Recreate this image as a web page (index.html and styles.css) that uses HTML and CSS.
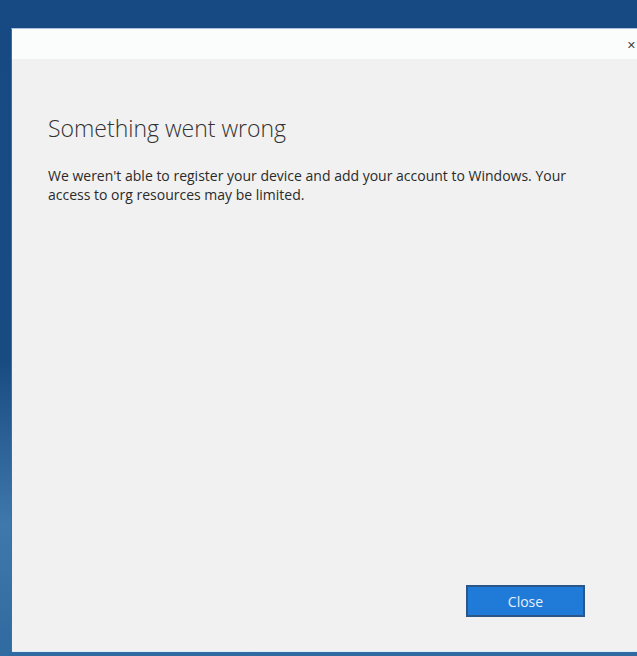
FILE: index.html
```html
<!DOCTYPE html>
<html>
<head>
<meta charset="utf-8">
<link rel="stylesheet" href="styles.css">
</head>
<body>
<div class="desktop">
  <div class="window">
    <div class="titlebar">
      <span class="close-x">✕</span>
    </div>
    <div class="content">
      <h1 class="title">Something went wrong</h1>
      <p class="message">We weren't able to register your device and add your account to Windows. Your access to org resources may be limited.</p>
      <div class="spacer"></div>
      <div class="actions">
        <button class="btn">Close</button>
      </div>
    </div>
  </div>
</div>
</body>
</html>
```
FILE: styles.css
```css
html, body {
  margin: 0;
  padding: 0;
  width: 637px;
  height: 656px;
  overflow: hidden;
}
.desktop {
  width: 637px;
  height: 656px;
  box-sizing: border-box;
  background: linear-gradient(180deg, #174a82 0%, #184b82 55%, #3f78ab 80%, #2f6aa0 100%);
  padding: 28px 0 4px 11px;
  display: flex;
}
.window {
  flex: 1;
  display: flex;
  flex-direction: column;
  background: #f1f1f1;
  border-left: 1px solid #3e6f9c;
  border-top: 1px solid #a9c2da;
  box-sizing: border-box;
  font-family: "Open Sans", "Noto Sans", sans-serif;
}
.titlebar {
  height: 30px;
  background: #fbfcfc;
  display: flex;
  justify-content: flex-end;
  align-items: center;
}
.close-x {
  font-family: "DejaVu Sans", sans-serif;
  font-size: 11px;
  color: #444;
  margin-right: 1px;
  margin-top: 2px;
}
.content {
  flex: 1;
  display: flex;
  flex-direction: column;
  padding: 0 0 0 36px;
  border-bottom: 1px solid #d9eefa;
}
.title {
  margin: 54px 0 0 0;
  font-weight: 300;
  font-size: 23px;
  line-height: 30px;
  color: #333;
}
.message {
  margin: 23px 0 0 0;
  width: 530px;
  font-size: 14px;
  line-height: 19px;
  color: #2a2a2a;
}
.spacer {
  flex: 1;
}
.actions {
  display: flex;
  justify-content: flex-end;
  padding-right: 52px;
  padding-bottom: 34px;
}
.btn {
  width: 119px;
  height: 32px;
  background: #1f7ad8;
  border: 2px solid #2c5687;
  color: #e6f0fb;
  font-family: "Open Sans", "Noto Sans", sans-serif;
  font-size: 14px;
  padding: 0;
}
```
